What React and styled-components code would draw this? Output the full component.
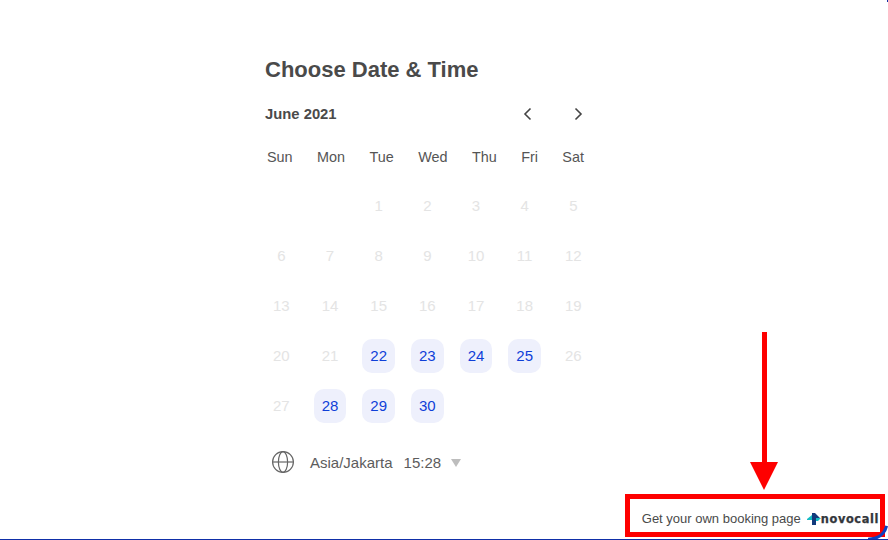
import React from "react";
import styled, { createGlobalStyle } from "styled-components";

const Global = createGlobalStyle`
  html, body { margin: 0; padding: 0; background: #fff; }
  body { font-family: "Liberation Sans", Arial, sans-serif; }
`;

const Page = styled.div`
  position: relative;
  width: 888px;
  height: 540px;
  box-sizing: border-box;
  overflow: hidden;
  background: #fff;
  border-bottom: 1px solid #0f2fa8;
  padding: 56px 0 0 265px;
  &::before {
    content: "";
    position: absolute;
    top: 0;
    right: 0;
    width: 1px;
    height: 2px;
    background: #0f2fa8;
  }
`;

const Scheduler = styled.main`
  width: 325px;
  color: #4a4a4a;
`;

const Title = styled.h1`
  margin: 0;
  font-size: 22px;
  line-height: 27px;
  font-weight: 700;
  color: #4a4a4a;
`;

const MonthBar = styled.div`
  display: flex;
  align-items: center;
  justify-content: space-between;
  margin-top: 19px;
  width: 321px;
  height: 24px;
`;

const MonthLabel = styled.div`
  font-size: 14.8px;
  font-weight: 700;
`;

const Arrows = styled.div`
  display: flex;
  gap: 34px;
`;

const ArrowButton = styled.button`
  width: 16px;
  height: 16px;
  padding: 0;
  border: 0;
  background: none;
  color: #444;
  svg { display: block; }
`;

const Weekdays = styled.div`
  display: flex;
  justify-content: space-between;
  width: 317px;
  margin: 22px 0 0 2px;
  font-size: 14.4px;
  line-height: 18px;
  color: #555;
`;

const DayGrid = styled.div`
  display: grid;
  grid-template-columns: repeat(7, 1fr);
  grid-auto-rows: 34px;
  gap: 16px;
  width: 324.67px;
  margin-top: 23px;
`;

const Day = styled.div`
  display: flex;
  align-items: center;
  justify-content: center;
  box-sizing: border-box;
  padding-bottom: 2px;
  font-size: 15px;
  border-radius: 10px;
  color: ${(p) => (p.$open ? "#0f3fd8" : "#e4e4e4")};
  background: ${(p) => (p.$open ? "#eef0fc" : "transparent")};
`;

const ZoneRow = styled.div`
  display: flex;
  align-items: center;
  margin: 27px 0 0 6px;
  height: 24px;
  font-size: 15px;
  color: #5c5c5c;
`;

const ZoneName = styled.span`
  margin-left: 15px;
`;

const ZoneTime = styled.span`
  margin-left: 11px;
`;

const Caret = styled.span`
  width: 0;
  height: 0;
  margin: 2px 0 0 10px;
  border-left: 5px solid transparent;
  border-right: 5px solid transparent;
  border-top: 8px solid #bdbdbd;
`;

const Promo = styled.a`
  position: absolute;
  right: 9px;
  bottom: 12px;
  display: flex;
  align-items: center;
  font-size: 13px;
  line-height: 16px;
  color: #4a4a4a;
`;

const Brand = styled.span`
  display: flex;
  align-items: center;
  margin-left: 6px;
`;

const BrandName = styled.span`
  font-family: "DejaVu Sans", sans-serif;
  font-size: 11.4px;
  font-weight: 700;
  letter-spacing: 0.6px;
  color: #33363b;
  -webkit-text-stroke: 0.25px #33363b;
`;

const Highlight = styled.div`
  position: absolute;
  left: 625px;
  top: 494px;
  width: 260px;
  height: 43px;
  box-sizing: border-box;
  border: 5px solid #fe0000;
`;

const Shaft = styled.div`
  position: absolute;
  left: 762px;
  top: 332px;
  width: 5px;
  height: 132px;
  background: #fe0000;
`;

const Head = styled.div`
  position: absolute;
  left: 750px;
  top: 462px;
  width: 0;
  height: 0;
  border-left: 14px solid transparent;
  border-right: 14px solid transparent;
  border-top: 28px solid #fe0000;
`;

const Corner = styled.svg`
  position: absolute;
  right: 0;
  bottom: -1px;
`;

const cal = [
  [null, null, 1, 2, 3, 4, 5],
  [6, 7, 8, 9, 10, 11, 12],
  [13, 14, 15, 16, 17, 18, 19],
  [20, 21, 22, 23, 24, 25, 26],
  [27, 28, 29, 30, null, null, null],
].flat();
const open = new Set([22, 23, 24, 25, 28, 29, 30]);

export default function App() {
  return (
    <>
      <Global />
      <Page>
        <Scheduler>
          <Title>Choose Date &amp; Time</Title>
          <MonthBar>
            <MonthLabel>June 2021</MonthLabel>
            <Arrows>
              <ArrowButton aria-label="Previous">
                <svg width="16" height="16" viewBox="0 0 16 16" fill="none" stroke="currentColor" strokeWidth="1.6"><path d="M10.5 2.5 5 8l5.5 5.5" /></svg>
              </ArrowButton>
              <ArrowButton aria-label="Next">
                <svg width="16" height="16" viewBox="0 0 16 16" fill="none" stroke="currentColor" strokeWidth="1.6"><path d="M5.5 2.5 11 8l-5.5 5.5" /></svg>
              </ArrowButton>
            </Arrows>
          </MonthBar>
          <Weekdays>
            {["Sun", "Mon", "Tue", "Wed", "Thu", "Fri", "Sat"].map((d) => <span key={d}>{d}</span>)}
          </Weekdays>
          <DayGrid>
            {cal.map((d, i) => <Day key={i} $open={open.has(d)}>{d}</Day>)}
          </DayGrid>
          <ZoneRow>
            <svg width="24" height="24" viewBox="0 0 24 24" fill="none" stroke="#666" strokeWidth="1.2">
              <circle cx="12" cy="12" r="10.4" />
              <ellipse cx="12" cy="12" rx="4.6" ry="10.4" />
              <path d="M1.6 12h20.8" />
            </svg>
            <ZoneName>Asia/Jakarta</ZoneName>
            <ZoneTime>15:28</ZoneTime>
            <Caret />
          </ZoneRow>
        </Scheduler>
        <Promo>
          Get your own booking page
          <Brand>
            <svg width="14" height="14" viewBox="0 0 14 14">
              <path d="M5 1 H8 L13 6 H9 V13 H5 Z" fill="#123a7c" />
              <path d="M0 7 L5 3 V8 H0 Z" fill="#16bcc4" />
              <path d="M9 6 H14 L11 9 H9 Z" fill="#16bcc4" />
            </svg>
            <BrandName>novocall</BrandName>
          </Brand>
        </Promo>
        <Highlight />
        <Shaft />
        <Head />
        <Corner width="20" height="16" viewBox="0 0 20 16" fill="none">
          <path d="M0 15.2C9 15 16 12 18.6 2" stroke="#0f3fc0" strokeWidth="3" />
        </Corner>
      </Page>
    </>
  );
}
